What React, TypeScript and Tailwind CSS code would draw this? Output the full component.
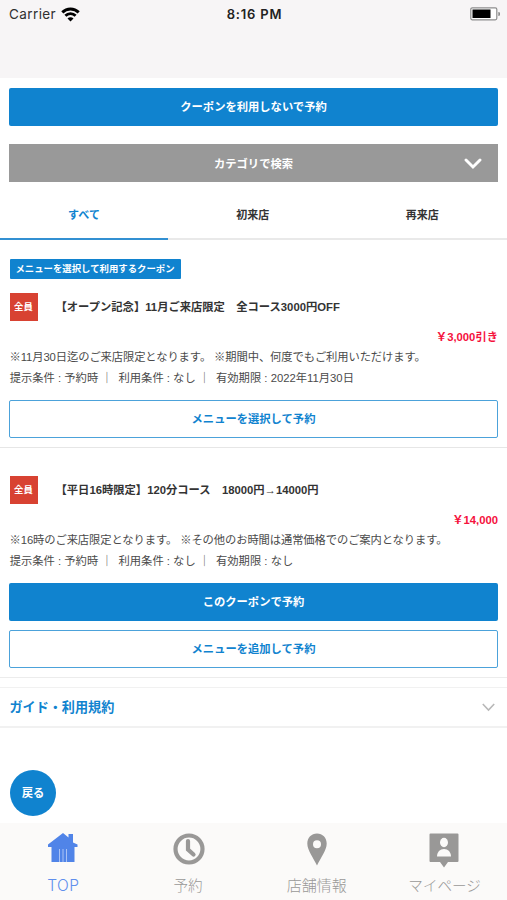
import React from 'react';
import clsx from 'clsx';

type Action = { label: string; primary?: boolean };

type Coupon = {
    id: number;
    title: string;
    price: string;
    note: string;
    expires: string;
    actions: Action[];
};

const coupons: Coupon[] = [
    {
        id: 1,
        title: '【オープン記念】11月ご来店限定　全コース3000円OFF',
        price: '￥3,000引き',
        note: '※11月30日迄のご来店限定となります。 ※期間中、何度でもご利用いただけます。',
        expires: '2022年11月30日',
        actions: [{ label: 'メニューを選択して予約' }],
    },
    {
        id: 2,
        title: '【平日16時限定】120分コース　18000円→14000円',
        price: '￥14,000',
        note: '※16時のご来店限定となります。 ※その他のお時間は通常価格でのご案内となります。',
        expires: 'なし',
        actions: [{ label: 'このクーポンで予約', primary: true }, { label: 'メニューを追加して予約' }],
    },
];

const HomeIcon = () => (
    <svg className="mb-[3px] mr-[2px]" width="31" height="31" viewBox="0 0 31 31" fill="#5084e8">
        <path d="M16 1L21.500 5.500V2H26v8.500L30.500 12.500v2.500H27.500v15H4.500V15H1v-2.500z" />
        <path d="M12.500 17v13M16 17v13M19.500 17v13" stroke="#a9c2f5" strokeWidth="1" />
    </svg>
);

const ClockIcon = () => (
    <svg className="mr-[2px]" width="32" height="32" viewBox="0 0 32 32" fill="none" stroke="#999897">
        <circle cx="16" cy="16" r="13.500" strokeWidth="4.200" />
        <path d="M15 8v8.500l5.500 5" strokeWidth="4.200" strokeLinecap="round" />
    </svg>
);

const PinIcon = () => (
    <svg className="mt-[1px]" width="20" height="33" viewBox="0 0 20 33" fill="#999897">
        <path fillRule="evenodd" d="M10 0.500C4.400 0.500 0.300 4.700 0.300 10.500c0 7 6.200 14.500 9.700 22C13.500 25 19.700 17.500 19.700 10.500 19.700 4.700 15.600 0.500 10 0.500zM10 7.200a4 4 0 1 1 0 8 4 4 0 0 1 0-8z" />
    </svg>
);

const MyPageIcon = () => (
    <svg className="mt-[4px]" width="30" height="35" viewBox="0 0 30 35">
        <path d="M1.500 0.500h27a1 1 0 0 1 1 1v26.500a1 1 0 0 1-1 1H19L15 34.500 11 29H1.500a1 1 0 0 1-1-1V1.500a1 1 0 0 1 1-1z" fill="#999897" />
        <ellipse cx="15" cy="9.500" rx="4" ry="4.700" fill="#fbfaf9" />
        <path d="M8 23.500c0-4.500 3-7.500 7-7.500s7 3 7 7.500z" fill="#fbfaf9" />
    </svg>
);

const tabs = [
    { label: 'TOP', icon: <HomeIcon />, active: true },
    { label: '予約', icon: <ClockIcon />, labelClass: 'text-[14.6px] pr-[4px]' },
    { label: '店舗情報', icon: <PinIcon />, labelClass: 'text-[15px]' },
    { label: 'マイページ', icon: <MyPageIcon />, labelClass: 'text-[14.6px] pl-[2px]' },
];

const StatusBar = () => (
    <header className="h-[78px] shrink-0 bg-[#f7f5f6]">
        <div className="grid h-7 grid-cols-3 items-center pl-[9px] pr-[7px]">
            <div className="flex items-center gap-[5px] font-['Inter'] text-[13.5px] tracking-[0.4px] text-[#303030]">
                Carrier
                <svg width="19" height="15" viewBox="0 0 19 15" fill="none" stroke="#000" strokeWidth="2.900">
                    <path d="M1.300 5.400a11.600 11.600 0 0 1 16.400 0" />
                    <path d="M4.400 8.700a7.200 7.200 0 0 1 10.200 0" />
                    <path d="M9.500 14.500L6.500 11.500a4.240 4.240 0 0 1 6 0z" fill="#000" stroke="none" />
                </svg>
            </div>
            <div className="pt-[1px] text-center font-['Inter'] text-[13px] font-semibold tracking-[0.8px] text-[#222]">8:16 PM</div>
            <svg className="justify-self-end" width="30" height="14" viewBox="0 0 30 14">
                <rect x="0.800" y="0.800" width="26" height="12" rx="1.500" fill="#fff" stroke="#8d8d8d" strokeWidth="1.200" />
                <rect x="2.500" y="2.500" width="18" height="8.500" fill="#000" />
                <path d="M28.300 5v4a2 2 0 0 0 0-4z" fill="#8d8d8d" />
            </svg>
        </div>
    </header>
);

const ActionButton = ({ label, primary }: Action) => (
    <button
        className={clsx(
            'flex h-[38px] w-full items-center justify-center rounded-[2px] pt-[1px] text-[11.3px] font-bold',
            primary ? 'bg-[#1083cf] text-white' : 'border border-[#4ca2da] bg-white text-[#1083cf]'
        )}
    >
        {label}
    </button>
);

const CouponCard = ({ coupon }: { coupon: Coupon }) => (
    <article className="px-[9px]">
        <div className="flex h-7 items-center">
            <span className="ml-[0.5px] flex size-7 items-center justify-center bg-[#d84232] text-[9.4px] font-bold text-white">全員</span>
            <h2 className="ml-[18px] whitespace-nowrap text-[11.3px] font-bold text-[#333]">{coupon.title}</h2>
        </div>
        <p className="mt-[5px] h-[21px] text-right text-[11.3px] font-bold leading-[22px] text-[#f5123d]">{coupon.price}</p>
        <p className="h-[21px] whitespace-nowrap pl-[0.5px] text-[11.3px] leading-[21px] tracking-[-0.1px] text-[#4a4a4a]">{coupon.note}</p>
        <p className="flex h-[21px] whitespace-nowrap pl-[0.7px] text-[11.3px] leading-[21px] text-[#4a4a4a]">
            <span>提示条件 : 予約時</span>
            <span className="ml-[3px] mr-[6px]">｜</span>
            <span>利用条件 : なし</span>
            <span className="ml-[3px] mr-[6px]">｜</span>
            <span>有効期限 : {coupon.expires}</span>
        </p>
        <div className="mt-[11px] flex flex-col gap-[9px]">
            {coupon.actions.map(action => (
                <ActionButton key={action.label} {...action} />
            ))}
        </div>
    </article>
);

const App = () => (
    <div className="flex h-[900px] w-full flex-col overflow-hidden bg-white font-['Liberation_Sans','Noto_Sans_CJK_JP',sans-serif]">
        <StatusBar />

        <main className="flex-1">
            <div className="px-[9px] pt-[10px]">
                <ActionButton label="クーポンを利用しないで予約" primary />
                <button className="mt-[18px] grid h-[38px] w-full grid-cols-[1fr_auto_1fr] items-center bg-[#999] text-[11.3px] font-bold text-white">
                    <span className="col-start-2 pt-[2px]">カテゴリで検索</span>
                    <svg className="mr-4 mt-[2px] justify-self-end" width="18" height="12" viewBox="0 0 18 12" fill="none" stroke="#fff" strokeWidth="2.900" strokeLinecap="round">
                        <path d="M2 2l7 7 7-7" />
                    </svg>
                </button>
            </div>

            <nav className="mt-[6px] grid h-[52px] grid-cols-[168px_1fr_1fr] text-[11px] font-bold text-[#333]">
                <button className="border-b-2 border-[#3290d2] pt-[4px] text-[#1083cf]">すべて</button>
                <button className="border-b-2 border-[#e9e9e9] pt-[4px]">初来店</button>
                <button className="border-b-2 border-[#e9e9e9] pt-[4px]">再来店</button>
            </nav>

            <section className="border-b border-[#e6e6e6] pb-[9px] pt-[19px]">
                <div className="mb-[14px] ml-[9.5px] flex h-5 w-[171px] items-center justify-center whitespace-nowrap rounded-[1px] bg-[#1083cf] text-[9.4px] font-bold text-white">
                    メニューを選択して利用するクーポン
                </div>
                <CouponCard coupon={coupons[0]} />
            </section>
            <section className="border-b border-[#ececec] pb-[9px] pt-[28px]">
                <CouponCard coupon={coupons[1]} />
            </section>

            <button className="mt-[9px] flex h-[41px] w-full items-center justify-between border-b-2 border-t border-[#f1f1f1] pl-[9.5px] pr-3 text-[13.1px] font-bold text-[#1083cf]">
                <span className="pt-[1px]">ガイド・利用規約</span>
                <svg width="13" height="9" viewBox="0 0 13 9" fill="none" stroke="#b8b8b8" strokeWidth="1.600">
                    <path d="M0.800 1l5.700 6 5.700-6" />
                </svg>
            </button>

            <button className="ml-[10px] mt-[42px] flex size-[46px] items-center justify-center rounded-full bg-[#1083cf] text-[11.3px] font-bold text-white">
                戻る
            </button>
        </main>

        <footer className="grid h-[77px] shrink-0 grid-cols-4 bg-[#fbfaf9] font-['Inter','Noto_Sans_CJK_JP',sans-serif] font-light">
            {tabs.map(tab => (
                <button key={tab.label} className={clsx('flex flex-col items-center', tab.active ? 'text-[#5f8fed]' : 'text-[#999897]')}>
                    <span className="flex h-[51px] items-center">{tab.icon}</span>
                    <span className={clsx('whitespace-nowrap leading-[24px]', tab.labelClass ?? 'text-[15.5px] tracking-[0.4px]')}>{tab.label}</span>
                </button>
            ))}
        </footer>
    </div>
);

export default App;
